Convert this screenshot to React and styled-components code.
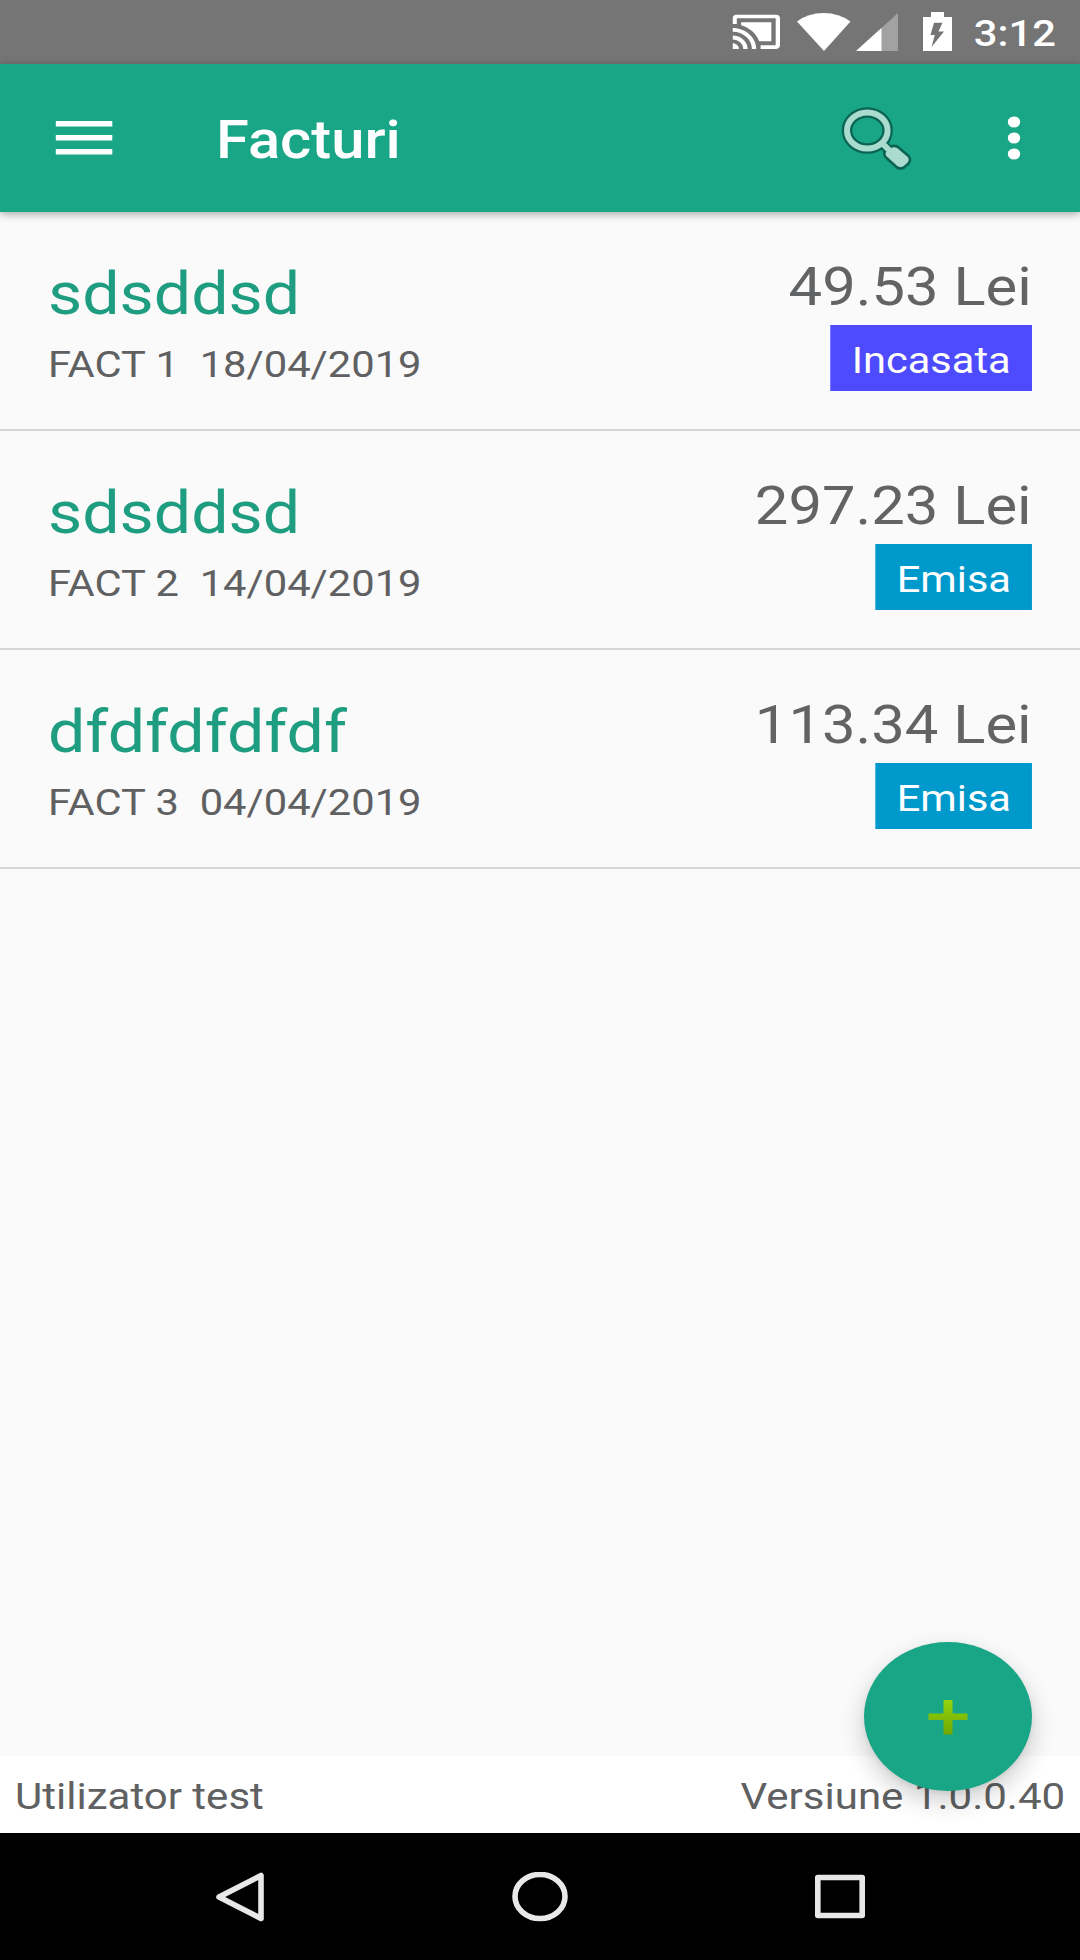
import React from "react";
import styled, { createGlobalStyle, css } from "styled-components";

const GlobalStyle = createGlobalStyle`
  body {
    margin: 0;
    background: #fafafa;
    font-family: Roboto, "Liberation Sans", sans-serif;
  }
`;

// the typeface is drawn a little wider than normal on this screen
const wide = css`
  display: block;
  white-space: pre;
  transform: scaleX(1.127);
  transform-origin: ${props => (props.$right ? "right" : "left")} center;
`;

const Screen = styled.div`
  position: relative;
  display: flex;
  flex-direction: column;
  width: 1080px;
  height: 1960px;
  overflow: hidden;
  background: #fafafa;
`;
const StatusBar = styled.header`
  display: flex;
  flex: none;
  justify-content: flex-end;
  height: 64px;
  padding-right: 24px;
  box-sizing: border-box;
  background: #757575;
`;
const StatusIcons = styled.svg`
  width: 230px;
  height: 64px;
  margin-right: 23px;
`;
const Clock = styled.span`
  ${wide}
  font-size: 37px;
  font-weight: 500;
  line-height: 67px;
  color: #fff;
`;
const AppBar = styled.nav`
  display: flex;
  flex: none;
  align-items: center;
  height: 148px;
  padding: 0 59px 0 55px;
  box-sizing: border-box;
  background: #19a687;
  box-shadow: 0 2px 8px rgba(0, 0, 0, 0.34);
  z-index: 1;
`;
const IconButton = styled.button`
  display: flex;
  padding: 0;
  border: none;
  background: none;
`;
const MenuButton = styled(IconButton)`
  margin-bottom: 1px;
`;
const Title = styled.h1`
  ${wide}
  flex: 1;
  margin: 4px 0 0 103px;
  font-size: 53px;
  font-weight: 500;
  line-height: 62px;
  color: #fff;
`;
const SearchButton = styled(IconButton)`
  margin: 1px 95px 0 0;
`;
const List = styled.main`
  flex: 1;
`;
const Row = styled.article`
  display: flex;
  justify-content: space-between;
  height: 219px;
  padding: 45px 48px 0;
  box-sizing: border-box;
  border-bottom: 2px solid #d6d6d6;
`;
const Col = styled.div`
  display: flex;
  flex-direction: column;
  align-items: ${props => (props.$right ? "flex-end" : "flex-start")};
`;
const Client = styled.span`
  ${wide}
  margin-top: 2px;
  font-size: 58.8px;
  line-height: 70px;
  color: #1f9d80;
`;
const Details = styled.span`
  ${wide}
  margin-top: 14px;
  font-size: 37px;
  line-height: 44px;
  color: #5f6062;
`;
const Amount = styled.span`
  ${wide}
  font-size: 53px;
  line-height: 60px;
  color: #626365;
`;
const Badge = styled.span`
  ${wide}
  margin-top: 8px;
  padding: 5px 19px 0;
  font-size: 36.9px;
  line-height: 61px;
  color: #fff;
  background: ${props => (props.$paid ? "#4e4bff" : "#0099cc")};
`;
const Footer = styled.footer`
  display: flex;
  flex: none;
  justify-content: space-between;
  height: 77px;
  padding: 0 15px;
  box-sizing: border-box;
  background: #fff;
`;
const FooterText = styled.span`
  ${wide}
  font-size: 37.3px;
  line-height: 81px;
  color: #5f6062;
`;
const NavBar = styled.div`
  display: flex;
  flex: none;
  align-items: center;
  justify-content: space-between;
  height: 127px;
  padding: 0 212px;
  box-sizing: border-box;
  background: #000;
`;
const NavIcon = styled.svg`
  width: 56px;
  height: 50px;
  fill: none;
  stroke: #e8e8e8;
  stroke-width: 5.6;
  stroke-linejoin: round;
`;
const AddButton = styled.button`
  position: absolute;
  right: 48px;
  bottom: 169px;
  display: flex;
  align-items: center;
  justify-content: center;
  width: 168px;
  height: 149px;
  padding: 0;
  border: none;
  border-radius: 50%;
  background: #19a687;
  box-shadow: 0 10px 24px rgba(0, 0, 0, 0.2), 0 2px 5px rgba(0, 0, 0, 0.06);
`;

const invoices = [
  { name: "sdsddsd", number: 1, date: "18/04/2019", total: "49.53", status: "Incasata" },
  { name: "sdsddsd", number: 2, date: "14/04/2019", total: "297.23", status: "Emisa" },
  { name: "dfdfdfdfdf", number: 3, date: "04/04/2019", total: "113.34", status: "Emisa" }
];

const Status = () => (
  <StatusIcons viewBox="730 0 230 64" fill="#fff">
    <svg x="732.5" y="14.5" width="47.5" height="34.5" viewBox="1 3 22 18" preserveAspectRatio="none">
      <path d="M21 3H3c-1.1 0-2 .9-2 2v3h2V5h18v14h-7v2h7c1.1 0 2-.9 2-2V5c0-1.1-.9-2-2-2zM1 18v3h3c0-1.66-1.34-3-3-3zm0-4v2c2.76 0 5 2.24 5 5h2c0-3.87-3.13-7-7-7zm0-4v2c4.97 0 9 4.03 9 9h2c0-6.08-4.93-11-11-11zM19 7H5v1.63c3.96 1.28 7.09 4.41 8.37 8.37H19z" />
    </svg>
    <path d="M797 21.5Q808 13 823.5 13T850.5 21.5L824 51z" />
    <path d="M856 51L898 13V51z" opacity="0.33" />
    <path d="M856 51L881.5 28V51z" />
    <path
      fillRule="evenodd"
      d="M923 17H931V12H944V17H952V51H923zM934 22.7L930.5 35H934.8L931.5 47L944 31.5H938.5L942.5 22.7z"
    />
  </StatusIcons>
);

const MenuIcon = () => (
  <svg width="58" height="36" fill="#fff">
    <path d="M.8 1H57.3V6.5H.8zM.8 15H57.3V20.5H.8zM.8 29H57.3V34.5H.8z" />
  </svg>
);

const SearchIcon = () => (
  <svg width="72" height="64" viewBox="839.5 106 72 64" fill="none">
    <ellipse cx="866.8" cy="129.5" rx="20.3" ry="18" stroke="#0b6353" strokeWidth="10.5" />
    <path d="M882 143L890 151" stroke="#0b6353" strokeWidth="10" />
    <path
      d="M884.5 150.5L890.5 145.5Q894 144 897.5 146L908 155Q911 158.500 908 162.500L903.500 166.500Q900 168.500 896.500 166.500L885.500 156.500Q882.500 153 884.500 150.500z"
      fill="#a9dccf"
      stroke="#0b6353"
      strokeWidth="2.6"
    />
    <path d="M881 141.5L890 150.5" stroke="#a9dccf" strokeWidth="6" />
    <ellipse cx="866.8" cy="129.5" rx="20.3" ry="18" stroke="#a9dccf" strokeWidth="6" />
  </svg>
);

const MoreIcon = () => (
  <svg width="14" height="44" fill="#fff">
    <ellipse cx="7" cy="6" rx="6.2" ry="5.6" />
    <ellipse cx="7" cy="22" rx="6.2" ry="5.6" />
    <ellipse cx="7" cy="38" rx="6.2" ry="5.6" />
  </svg>
);

const PlusIcon = () => (
  <svg width="40" height="36">
    <defs>
      <linearGradient id="lime" x2="0" y2="1">
        <stop offset="0" stopColor="#94d40f" />
        <stop offset="1" stopColor="#6fa800" />
      </linearGradient>
    </defs>
    <path d="M15.5 1H24.5V14.5H39.5V21H24.5V35.5H15.5V21H.5V14.5H15.5z" fill="url(#lime)" />
  </svg>
);

const Invoice = ({ invoice }) => (
  <Row>
    <Col>
      <Client>{invoice.name}</Client>
      <Details>{`FACT ${invoice.number}  ${invoice.date}`}</Details>
    </Col>
    <Col $right>
      <Amount $right>{invoice.total} Lei</Amount>
      <Badge $right $paid={invoice.status === "Incasata"}>
        {invoice.status}
      </Badge>
    </Col>
  </Row>
);

const App = () => (
  <Screen>
    <GlobalStyle />
    <StatusBar>
      <Status />
      <Clock $right>3:12</Clock>
    </StatusBar>
    <AppBar>
      <MenuButton aria-label="Meniu">
        <MenuIcon />
      </MenuButton>
      <Title>Facturi</Title>
      <SearchButton aria-label="Cauta">
        <SearchIcon />
      </SearchButton>
      <IconButton aria-label="Optiuni">
        <MoreIcon />
      </IconButton>
    </AppBar>
    <List>
      {invoices.map(i => (
        <Invoice key={i.number} invoice={i} />
      ))}
    </List>
    <Footer>
      <FooterText>Utilizator test</FooterText>
      <FooterText $right>Versiune 1.0.0.40</FooterText>
    </Footer>
    <NavBar>
      <NavIcon viewBox="0 0 56 50">
        <path d="M7 25L49 3.5V46.5z" />
      </NavIcon>
      <NavIcon viewBox="0 0 56 50">
        <ellipse cx="28" cy="24.5" rx="25" ry="22" />
      </NavIcon>
      <NavIcon viewBox="0 0 56 50">
        <path d="M5.8 5.5H50.2V43.5H5.8z" />
      </NavIcon>
    </NavBar>
    <AddButton aria-label="Adauga">
      <PlusIcon />
    </AddButton>
  </Screen>
);

export default App;
